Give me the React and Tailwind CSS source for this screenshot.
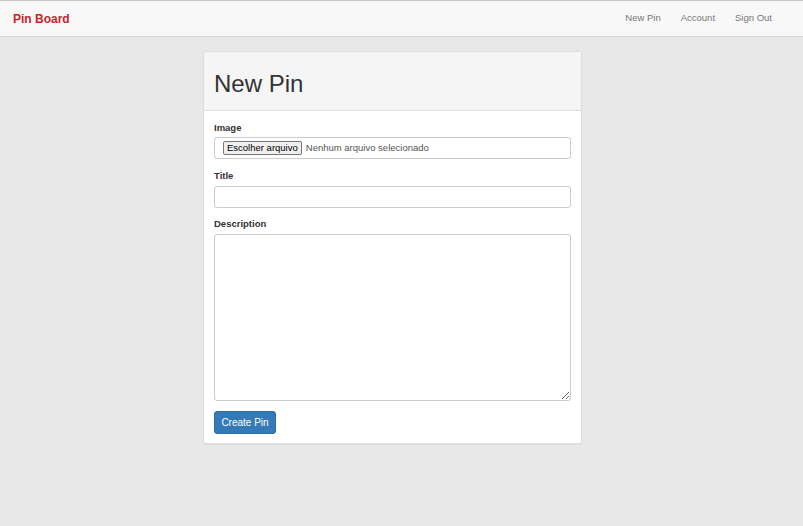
export default function App() {
  return (
    <div className="min-h-[526px] bg-[#e8e8e8] font-['Liberation_Sans',Arial,sans-serif] text-[#333]">
      <nav className="h-[37px] bg-[#f8f8f8] border-t border-t-[#c8c8c8] border-b border-b-[#d4d4d4] flex items-center justify-between">
        <a className="ml-[13px] text-[12px] font-bold text-[#c9232b]">Pin Board</a>
        <div className="flex items-center gap-[20px] mr-[31px] text-[9.5px] text-[#777]">
          <a>New Pin</a>
          <a>Account</a>
          <a>Sign Out</a>
        </div>
      </nav>
      <div className="ml-[203px] mt-[14px] w-[379px] bg-white border border-[#dddddd] rounded-[3px] shadow-[0_1px_1px_rgba(0,0,0,0.05)]">
        <div className="h-[59px] bg-[#f5f5f5] border-b border-[#dddddd] rounded-t-[3px] flex items-center px-[10px]">
          <h1 className="text-[24px] leading-none text-[#333] mt-[5px]">New Pin</h1>
        </div>
        <div className="px-[10px] pt-[11px] pb-[9px]">
          <div className="text-[9.5px] font-bold leading-[10px] pt-[1px] mb-[4px]">Image</div>
          <div className="h-[22px] w-[357px] border border-[#cccccc] rounded-[3px] flex items-center px-[8px] text-[9.5px]">
            <span className="h-[14px] px-[3px] flex items-center border border-[#767676] bg-[#efefef] rounded-[2px] text-[#000]">Escolher arquivo</span>
            <span className="ml-[4px] text-[#555]">Nenhum arquivo selecionado</span>
          </div>
          <div className="text-[9.5px] font-bold leading-[10px] mt-[11px] pt-[1px] mb-[5px]">Title</div>
          <div className="h-[22px] w-[357px] border border-[#cccccc] rounded-[3px] bg-white"></div>
          <div className="text-[9.5px] font-bold leading-[10px] mt-[10px] pt-[1px] mb-[5px]">Description</div>
          <textarea className="block h-[167px] w-[357px] border border-[#cccccc] rounded-[3px] outline-none resize-y"></textarea>
          <button className="mt-[10px] h-[23px] w-[62px] bg-[#337ab7] border border-[#2e6da4] rounded-[3px] text-white text-[10px] flex items-center justify-center">Create Pin</button>
        </div>
      </div>
    </div>
  );
}
